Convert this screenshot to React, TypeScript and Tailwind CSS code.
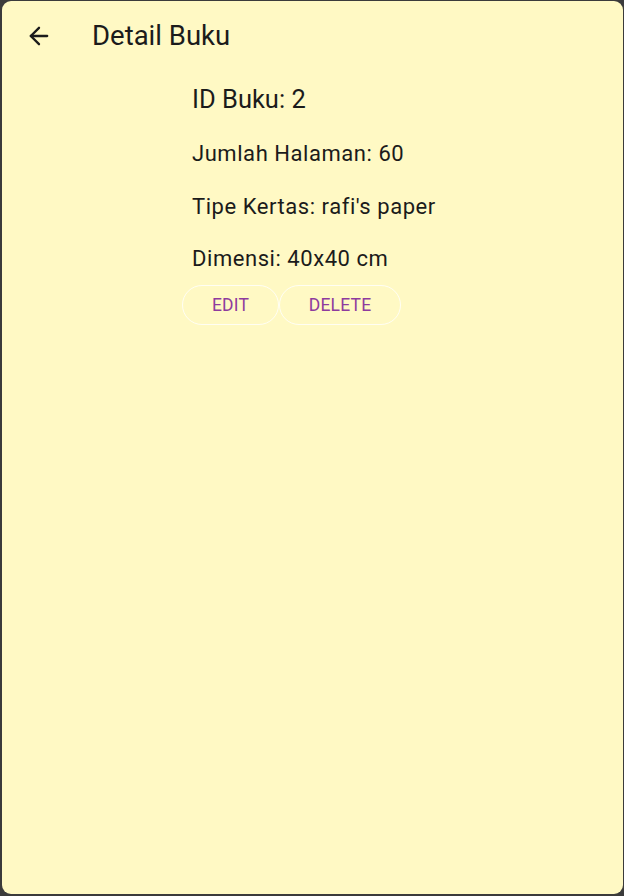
import { ArrowLeft } from 'lucide-react'

const font = { fontFamily: 'Roboto, "Noto Sans", sans-serif' }

function DetailRow({ text, size }: { text: string; size: 'lg' | 'md' }) {
  return (
    <p
      className={
        size === 'lg'
          ? 'pl-[10px] text-[25.5px] leading-[30px] text-[#1b1b1b]'
          : 'pl-[10px] text-[22px] leading-[28px] tracking-[0.55px] text-[#1b1b1b]'
      }
    >
      {text}
    </p>
  )
}

export default function App() {
  return (
    <div className="w-[624px] h-[896px] bg-[#3b3b3b] pt-[1px] pl-[2px] pr-[1px] pb-[2px]" style={font}>
      <div className="w-full h-full bg-[#fff9c4] rounded-[9px] flex flex-col">
        <header className="h-[70px] flex items-center shrink-0">
          <button className="ml-[22px] w-[30px] h-[30px] flex items-center justify-center text-[#1b1b1b]" aria-label="Back">
            <ArrowLeft size={28} strokeWidth={2} />
          </button>
          <h1 className="ml-[38px] text-[27.5px] leading-[34px] text-[#1b1b1b]">Detail Buku</h1>
        </header>

        <div className="flex flex-col pl-[180px] mt-[13px]">
          <DetailRow text="ID Buku: 2" size="lg" />
          <div className="mt-[26px]">
            <DetailRow text="Jumlah Halaman: 60" size="md" />
          </div>
          <div className="mt-[25px]">
            <DetailRow text="Tipe Kertas: rafi's paper" size="md" />
          </div>
          <div className="mt-[24px]">
            <DetailRow text="Dimensi: 40x40 cm" size="md" />
          </div>
          <div className="flex mt-[12px]">
            <button className="w-[97px] h-[40px] rounded-full border border-white/80 text-[17.5px] tracking-[0.2px] text-[#8e3b9e]">
              EDIT
            </button>
            <button className="w-[122px] h-[40px] rounded-full border border-white/80 text-[17.5px] tracking-[0.2px] text-[#8e3b9e]">
              DELETE
            </button>
          </div>
        </div>
      </div>
    </div>
  )
}
